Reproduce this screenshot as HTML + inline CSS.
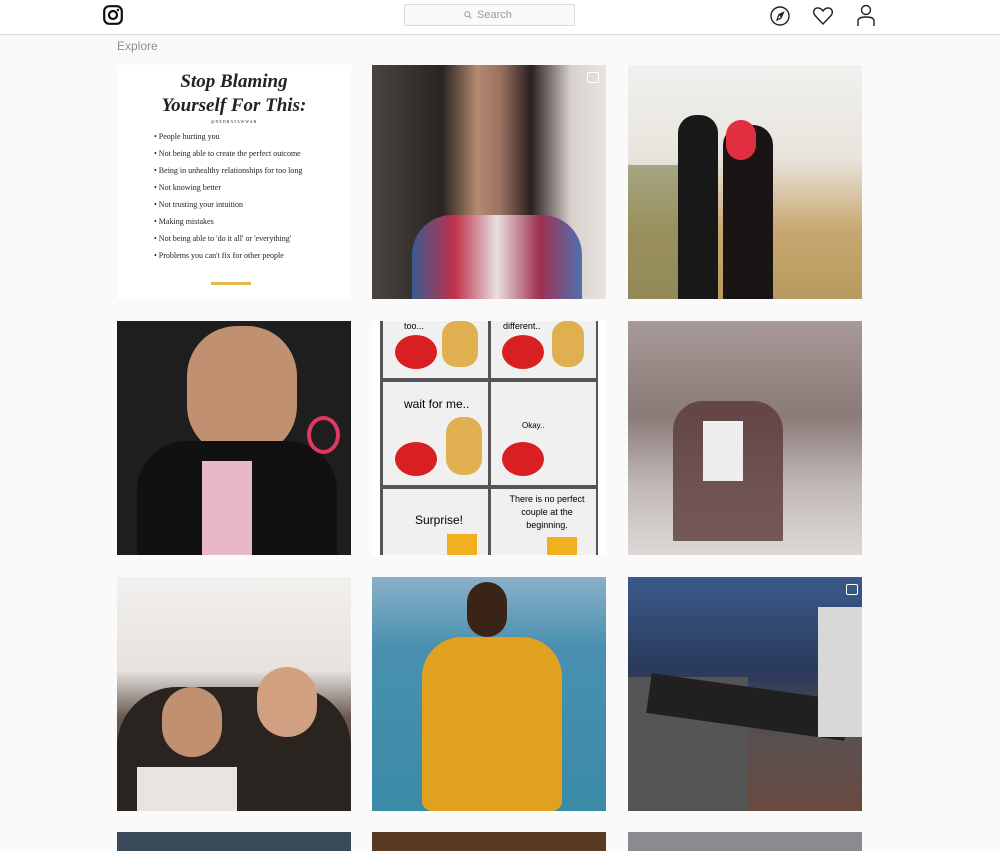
<!DOCTYPE html><html><head><style>
body{margin:0;width:1000px;height:851px;background:#fafafa;font-family:"Liberation Sans",sans-serif;overflow:hidden;position:relative}
.hdr{position:absolute;left:0;top:0;width:1000px;height:34px;background:#fff;border-bottom:1px solid #dbdbdb}
.t{position:absolute;width:234px;height:234px;overflow:hidden}
.abs{position:absolute}
</style></head><body>
<div class="hdr">
<svg class="abs" style="left:103px;top:5px" width="20" height="20" viewBox="0 0 20 20"><rect x="1.2" y="1.2" width="17.6" height="17.6" rx="5" fill="none" stroke="#111" stroke-width="2.2"/><circle cx="10" cy="10" r="4" fill="none" stroke="#111" stroke-width="2.2"/><circle cx="15" cy="5" r="1.2" fill="#111"/></svg>
<div class="abs" style="left:404px;top:4px;width:169px;height:20px;border:1px solid #dbdbdb;background:#fafafa;border-radius:2px;font-size:11px;color:#999;line-height:20px"><svg class="abs" style="left:59px;top:6px" width="8" height="8" viewBox="0 0 8 8"><circle cx="3.3" cy="3.3" r="2.5" fill="none" stroke="#999" stroke-width="1"/><path d="M5 5 L7.5 7.5" stroke="#999" stroke-width="1"/></svg><span class="abs" style="left:72px">Search</span></div>
<svg class="abs" style="left:769px;top:5px" width="22" height="22" viewBox="0 0 22 22"><circle cx="11" cy="11" r="9" fill="none" stroke="#222" stroke-width="1.4"/><path d="M14.5 7.5 L12 13 L8 15 L10 9.5Z" fill="none" stroke="#222" stroke-width="1.2"/><path d="M14.5 7.5 L10 9.5 L12 13Z" fill="#222"/></svg>
<svg class="abs" style="left:812px;top:5px" width="22" height="22" viewBox="0 0 22 22"><path d="M11 19 L3 10.5 C0 7 2.5 2.5 6.5 3 C8.5 3.2 10 4.5 11 6 C12 4.5 13.5 3.2 15.5 3 C19.5 2.5 22 7 19 10.5Z" fill="none" stroke="#222" stroke-width="1.4"/></svg>
<svg class="abs" style="left:855px;top:4px" width="22" height="24" viewBox="0 0 22 24"><circle cx="11" cy="6" r="4.5" fill="none" stroke="#222" stroke-width="1.4"/><path d="M3 22 V17 C3 14 6 13 11 13 C16 13 19 14 19 17 V22" fill="none" stroke="#222" stroke-width="1.4"/></svg>
</div>
<div class="abs" style="left:117px;top:39px;font-size:12px;color:#8e8e8e">Explore</div>

<div class="t" style="left:117px;top:65px;background:#fff;font-family:'Liberation Serif',serif;color:#222">
<div class="abs" style="left:0;width:234px;top:5px;text-align:center;font-size:19px;font-weight:bold;font-style:italic;line-height:24px">Stop Blaming<br>Yourself For This:</div>
<div class="abs" style="left:0;width:234px;top:54px;text-align:center;font-size:4px;letter-spacing:1px">@NEDRATAWWAB</div>
<div class="abs" style="left:37px;top:63px;font-size:8px;line-height:17px;white-space:nowrap">• People hurting you<br>• Not being able to create the perfect outcome<br>• Being in unhealthy relationships for too long<br>• Not knowing better<br>• Not trusting your intuition<br>• Making mistakes<br>• Not being able to 'do it all' or 'everything'<br>• Problems you can't fix for other people</div>
<div class="abs" style="left:94px;top:217px;width:40px;height:3px;background:#e8b84a"></div>
</div>

<div class="t" style="left:372px;top:65px;background:linear-gradient(90deg,#4a4440 0%,#2a2420 30%,#b58a70 45%,#9a7060 55%,#2a2020 68%,#d8d0cc 85%,#e8e4e0 100%)">
<div class="abs" style="left:40px;top:150px;width:170px;height:84px;background:linear-gradient(90deg,#3a5a90,#c0304a,#e8e0e0,#a03050,#5070b0);border-radius:40px 40px 0 0"></div>
<div class="abs" style="left:215px;top:7px;width:10px;height:9px;border:1.5px solid #fff;border-radius:2px"></div></div>

<div class="t" style="left:628px;top:65px;background:linear-gradient(180deg,#f0f0ee 0%,#e8e4dc 40%,#c8a870 70%,#b89a60 100%)">
<div class="abs" style="left:0;top:100px;width:80px;height:134px;background:#7a8050;opacity:.6"></div>
<div class="abs" style="left:50px;top:50px;width:40px;height:184px;background:#181818;border-radius:18px 18px 0 0"></div>
<div class="abs" style="left:95px;top:60px;width:50px;height:174px;background:#1a1414;border-radius:20px 20px 0 0"></div>
<div class="abs" style="left:98px;top:55px;width:30px;height:40px;background:#e03040;border-radius:15px"></div></div>

<div class="t" style="left:117px;top:321px;background:#1e1e1e">
<div class="abs" style="left:70px;top:5px;width:110px;height:130px;background:#c09070;border-radius:50px"></div>
<div class="abs" style="left:20px;top:120px;width:200px;height:114px;background:#111;border-radius:50px 50px 0 0"></div>
<div class="abs" style="left:85px;top:140px;width:50px;height:94px;background:#e8b8c8"></div>
<div class="abs" style="left:190px;top:95px;width:25px;height:30px;border:4px solid #e03860;border-radius:50%"></div></div>

<div class="t" style="left:372px;top:321px;background:#fff">
<div class="abs" style="left:8px;top:0;width:218px;height:234px;background:#555"></div>
<div class="abs" style="left:11px;top:0;width:105px;height:57px;background:#f0f0f0"></div>
<div class="abs" style="left:119px;top:0;width:105px;height:57px;background:#f0f0f0"></div>
<div class="abs" style="left:11px;top:61px;width:105px;height:103px;background:#f0f0f0"></div>
<div class="abs" style="left:119px;top:61px;width:105px;height:103px;background:#f0f0f0"></div>
<div class="abs" style="left:11px;top:168px;width:105px;height:66px;background:#f0f0f0"></div>
<div class="abs" style="left:119px;top:168px;width:105px;height:66px;background:#f0f0f0"></div>
<div class="abs" style="left:32px;top:0;font-size:9px">too...</div>
<div class="abs" style="left:131px;top:0;font-size:9px">different..</div>
<div class="abs" style="left:32px;top:76px;font-size:12px">wait for me..</div>
<div class="abs" style="left:150px;top:100px;font-size:8px">Okay..</div>
<div class="abs" style="left:43px;top:192px;font-size:12px">Surprise!</div>
<div class="abs" style="left:135px;top:172px;width:80px;text-align:center;font-size:9px;line-height:13px">There is no perfect couple at the beginning.</div>
<div class="abs" style="left:23px;top:14px;width:42px;height:34px;background:#d81f22;border-radius:50%"></div>
<div class="abs" style="left:130px;top:14px;width:42px;height:34px;background:#d81f22;border-radius:50%"></div>
<div class="abs" style="left:70px;top:0;width:36px;height:46px;background:#e0b050;border-radius:14px"></div>
<div class="abs" style="left:180px;top:0;width:32px;height:46px;background:#e0b050;border-radius:14px"></div>
<div class="abs" style="left:23px;top:121px;width:42px;height:34px;background:#d81f22;border-radius:50%"></div>
<div class="abs" style="left:130px;top:121px;width:42px;height:34px;background:#d81f22;border-radius:50%"></div>
<div class="abs" style="left:74px;top:96px;width:36px;height:58px;background:#e0b050;border-radius:16px"></div>
<div class="abs" style="left:75px;top:213px;width:30px;height:21px;background:#f0b020"></div>
<div class="abs" style="left:175px;top:216px;width:30px;height:18px;background:#f0b020"></div></div>

<div class="t" style="left:628px;top:321px;background:linear-gradient(180deg,#a89a98 0%,#8a7a78 40%,#c0b8b6 70%,#ddd8d6 100%)">
<div class="abs" style="left:45px;top:80px;width:110px;height:140px;background:#5a3a3a;border-radius:30px 30px 0 0;opacity:.8"></div>
<div class="abs" style="left:75px;top:100px;width:40px;height:60px;background:#eee"></div></div>

<div class="t" style="left:117px;top:577px;background:linear-gradient(180deg,#f2f0ee 0%,#e6e2de 40%,#6a5a50 60%,#2a2222 100%)">
<div class="abs" style="left:0;top:110px;width:234px;height:124px;background:#2a2420;border-radius:60px 60px 0 0"></div>
<div class="abs" style="left:45px;top:110px;width:60px;height:70px;background:#c09070;border-radius:30px"></div>
<div class="abs" style="left:140px;top:90px;width:60px;height:70px;background:#d0a080;border-radius:30px"></div>
<div class="abs" style="left:20px;top:190px;width:100px;height:44px;background:#e8e4e0"></div></div>

<div class="t" style="left:372px;top:577px;background:linear-gradient(180deg,#8ab0c8 0%,#4a90b0 30%,#3a8aa8 100%)">
<div class="abs" style="left:50px;top:60px;width:140px;height:174px;background:#e0a020;border-radius:40px 40px 10px 10px"></div>
<div class="abs" style="left:95px;top:5px;width:40px;height:55px;background:#3a2418;border-radius:20px"></div></div>

<div class="t" style="left:628px;top:577px;background:linear-gradient(180deg,#3a5a8a 0%,#2a3a5a 40%,#5a5050 70%,#6a4a40 100%)">
<div class="abs" style="left:0;top:100px;width:120px;height:134px;background:#555"></div>
<div class="abs" style="left:20px;top:110px;width:200px;height:40px;background:#202020;transform:rotate(8deg)"></div>
<div class="abs" style="left:190px;top:30px;width:44px;height:130px;background:#d8d8d8"></div>
<div class="abs" style="left:218px;top:7px;width:10px;height:9px;border:1.5px solid #fff;border-radius:2px"></div></div>

<div class="t" style="left:117px;top:832px;height:19px;background:#3a4a5a"></div>
<div class="t" style="left:372px;top:832px;height:19px;background:#5a3a20"></div>
<div class="t" style="left:628px;top:832px;height:19px;background:#8a8a90"></div>
</body></html>
